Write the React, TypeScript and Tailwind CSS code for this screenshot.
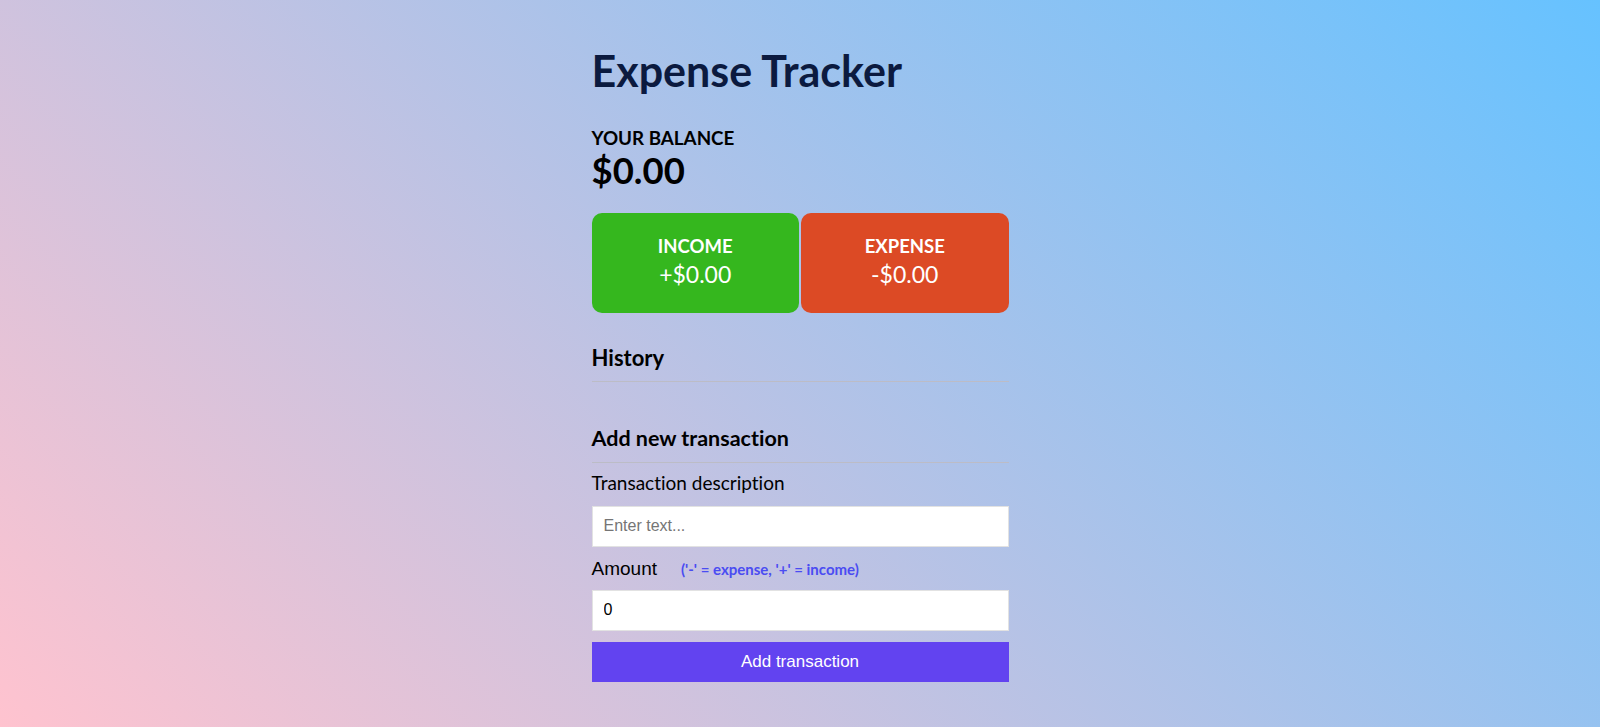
import { useState } from 'react';

function App() {
  const [text, setText] = useState('');
  const [amount, setAmount] = useState('0');

  return (
    <div className="min-h-screen bg-[linear-gradient(45deg,#ffc3cf,#66c2ff)] font-['Lato','Noto_Sans',sans-serif] [font-variant-ligatures:no-common-ligatures]">
      <div className="w-[417px] mx-auto pt-[45px] pb-10">
        {/* Header */}
        <h1 className="text-[43px] leading-[1.2] font-bold text-[#0b1a3f]">Expense Tracker</h1>

        {/* Balance */}
        <h4 className="mt-[30px] text-[18.8px] leading-[1.2] font-bold text-black">YOUR BALANCE</h4>
        <h2 className="text-[36.5px] leading-[1.2] font-bold text-black">$0.00</h2>

        {/* Income / Expense */}
        <div className="mt-[20px] flex gap-[2px]">
          <div className="flex-1 h-[100px] rounded-[10px] bg-[#35b71e] text-white text-center pt-[22px]">
            <h4 className="text-[18.5px] leading-[1.2] font-bold">INCOME</h4>
            <p className="mt-[4px] text-[23px] leading-[1.2]">+$0.00</p>
          </div>
          <div className="flex-1 h-[100px] rounded-[10px] bg-[#dc4a25] text-white text-center pt-[22px]">
            <h4 className="text-[18.5px] leading-[1.2] font-bold">EXPENSE</h4>
            <p className="mt-[4px] text-[23px] leading-[1.2]">-$0.00</p>
          </div>
        </div>

        {/* History */}
        <h3 className="mt-[32px] pb-[10px] border-b border-[#bcbcc6] text-[22px] leading-[1.2] font-bold text-black">
          History
        </h3>
        <ul></ul>

        {/* Form */}
        <h3 className="mt-[44px] pb-[10px] border-b border-[#bcbcc6] text-[21.5px] leading-[1.2] font-bold text-black">
          Add new transaction
        </h3>
        <form onSubmit={(e) => e.preventDefault()}>
          <label className="block mt-[9px] text-[19px] leading-[1.2] text-black">Transaction description</label>
          <input
            type="text"
            value={text}
            onChange={(e) => setText(e.target.value)}
            placeholder="Enter text..."
            className="block w-full mt-[11px] h-[41px] px-[11px] bg-white border border-[#e2e2e2] font-['Liberation_Sans',Arial,sans-serif] text-[16px] text-black placeholder:text-[#757575] outline-none"
          />
          <div className="mt-[11px] flex items-baseline">
            <label className="font-['Liberation_Sans',Arial,sans-serif] text-[19px] leading-[1.2] text-black">Amount</label>
            <span className="ml-[24px] text-[15px] font-bold text-[#4a4cf2]">('-' = expense, '+' = income)</span>
          </div>
          <input
            type="number"
            value={amount}
            onChange={(e) => setAmount(e.target.value)}
            className="block w-full mt-[9px] h-[41px] px-[11px] bg-white border border-[#e2e2e2] font-['Liberation_Sans',Arial,sans-serif] text-[16px] text-black outline-none [appearance:textfield]"
          />
          <button
            type="submit"
            className="block w-full mt-[11px] h-[40px] bg-[#6243f0] text-white font-['Liberation_Sans',Arial,sans-serif] text-[17px]"
          >
            Add transaction
          </button>
        </form>
      </div>
    </div>
  );
}

export default App;
